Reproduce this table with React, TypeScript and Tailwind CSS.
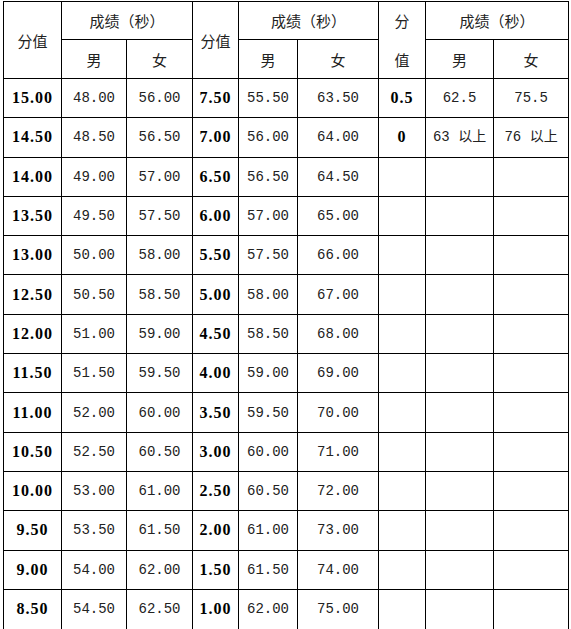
const mono = "font-['Liberation_Mono','Noto_Sans_CJK_SC',monospace] text-[14px] text-[#222] leading-none";
const bold = "font-['Liberation_Serif',serif] font-bold text-[16px] tracking-[1px] text-black leading-none";
const cjk = "font-['Noto_Sans_CJK_SC',sans-serif] text-[15px] text-[#222] leading-none font-normal";

const left = Array.from({ length: 14 }, (_, i) => [
  (15 - i * 0.5).toFixed(2),
  (48 + i * 0.5).toFixed(2),
  (56 + i * 0.5).toFixed(2),
]);

const mid = [
  ['7.50', '55.50', '63.50'],
  ['7.00', '56.00', '64.00'],
  ['6.50', '56.50', '64.50'],
  ['6.00', '57.00', '65.00'],
  ['5.50', '57.50', '66.00'],
  ['5.00', '58.00', '67.00'],
  ['4.50', '58.50', '68.00'],
  ['4.00', '59.00', '69.00'],
  ['3.50', '59.50', '70.00'],
  ['3.00', '60.00', '71.00'],
  ['2.50', '60.50', '72.00'],
  ['2.00', '61.00', '73.00'],
  ['1.50', '61.50', '74.00'],
  ['1.00', '62.00', '75.00'],
];

const right = [
  ['0.5', '62.5', '75.5'],
  ['0', '63 以上', '76 以上'],
];

const cell = 'border-[1.5px] border-black text-center align-middle p-0';

export default function App() {
  return (
    <div className="min-h-screen bg-white pl-[3px] pt-[1px] overflow-hidden">
      <table className="table-fixed border-collapse w-[566px]">
        <colgroup>
          {[58, 65, 66, 46, 59, 81, 47, 68, 75].map((w, i) => (
            <col key={i} style={{ width: w }} />
          ))}
        </colgroup>
        <thead>
          <tr className="h-[38px]">
            <th rowSpan={2} className={`${cell} ${cjk}`}>分值</th>
            <th colSpan={2} className={`${cell} ${cjk}`}>成绩（秒）</th>
            <th rowSpan={2} className={`${cell} ${cjk}`}>分值</th>
            <th colSpan={2} className={`${cell} ${cjk}`}>成绩（秒）</th>
            <th rowSpan={2} className={`${cell} ${cjk}`}>
              <div className="flex flex-col items-center gap-[24px]">
                <span>分</span>
                <span>值</span>
              </div>
            </th>
            <th colSpan={2} className={`${cell} ${cjk}`}>成绩（秒）</th>
          </tr>
          <tr className="h-[39px]">
            <th className={`${cell} ${cjk}`}>男</th>
            <th className={`${cell} ${cjk}`}>女</th>
            <th className={`${cell} ${cjk}`}>男</th>
            <th className={`${cell} ${cjk}`}>女</th>
            <th className={`${cell} ${cjk}`}>男</th>
            <th className={`${cell} ${cjk}`}>女</th>
          </tr>
        </thead>
        <tbody>
          {left.map((row, i) => {
            const r = right[i] || ['', '', ''];
            const last = i === left.length - 1 ? 'border-b-0' : '';
            return (
              <tr key={i} className="h-[39.3px]">
                <td className={`${cell} ${bold} ${last}`}>{row[0]}</td>
                <td className={`${cell} ${mono} ${last}`}>{row[1]}</td>
                <td className={`${cell} ${mono} ${last}`}>{row[2]}</td>
                <td className={`${cell} ${bold} ${last}`}>{mid[i][0]}</td>
                <td className={`${cell} ${mono} ${last}`}>{mid[i][1]}</td>
                <td className={`${cell} ${mono} ${last}`}>{mid[i][2]}</td>
                <td className={`${cell} ${bold} ${last}`}>{r[0]}</td>
                <td className={`${cell} ${mono} ${last} whitespace-nowrap`}>{r[1]}</td>
                <td className={`${cell} ${mono} ${last} whitespace-nowrap`}>{r[2]}</td>
              </tr>
            );
          })}
        </tbody>
      </table>
    </div>
  );
}
